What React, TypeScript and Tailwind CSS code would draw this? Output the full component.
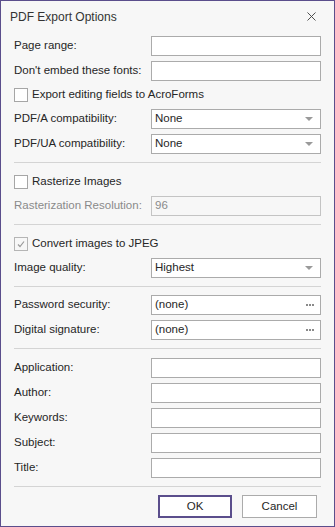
import { X } from "lucide-react";

const font = { fontFamily: '"Liberation Sans", Arial, sans-serif' };

function Field({
  label,
  value = "",
  kind = "text",
  disabled = false,
}: {
  label: string;
  value?: string;
  kind?: "text" | "combo" | "button";
  disabled?: boolean;
}) {
  return (
    <div className="flex items-center h-5">
      <div
        className={`w-[137px] text-[11.5px] ${disabled ? "text-[#8a8a8a]" : "text-[#262626]"}`}
      >
        {label}
      </div>
      <div
        className={`flex-1 h-5 border flex items-center pl-[3px] pr-[6px] text-[11.5px] ${
          disabled ? "bg-[#f7f7f7] text-[#8a8a8a] border-[#c4c4c4]" : "bg-white text-[#262626] border-[#ababab]"
        }`}
      >
        <span className="flex-1">{value}</span>
        {kind === "combo" && (
          <span className="w-0 h-0 border-l-[4px] border-r-[4px] border-t-[4px] border-l-transparent border-r-transparent border-t-[#9a9a9a] mr-[1px]" />
        )}
        {kind === "button" && (
          <span className="flex gap-[1px]">
            <span className="w-[2px] h-[2px] bg-[#8a8a8a]" />
            <span className="w-[2px] h-[2px] bg-[#8a8a8a]" />
            <span className="w-[2px] h-[2px] bg-[#8a8a8a]" />
          </span>
        )}
      </div>
    </div>
  );
}

function Check({ label, checked = false }: { label: string; checked?: boolean }) {
  return (
    <div className="flex items-center h-[18px] gap-[4px] text-[11.5px] text-[#262626]">
      <span
        className={`w-[14px] h-[14px] border flex items-center justify-center ${
          checked ? "border-[#b5b5b5] bg-[#f7f7f7]" : "border-[#a6a6a6] bg-white"
        }`}
      >
        {checked && (
          <svg width="10" height="10" viewBox="0 0 10 10">
            <path d="M2 5.5 L4 7.5 L8 2.5" fill="none" stroke="#9a9a9a" strokeWidth="1.2" />
          </svg>
        )}
      </span>
      <span>{label}</span>
    </div>
  );
}

function Sep() {
  return <div className="h-px bg-[#d4d4d4] my-[8px]" />;
}

export default function App() {
  return (
    <div
      className="w-[335px] h-[527px] bg-[#f7f7f7] border border-[#5b4e8c] flex flex-col"
      style={font}
    >
      <div className="h-[31px] mb-[4px] flex items-center justify-between pl-[9px] pr-[15px]">
        <span className="text-[12px] text-[#333]">PDF Export Options</span>
        <X className="w-[15px] h-[15px] text-[#444]" strokeWidth={1.5} />
      </div>

      <div className="px-[13px] flex flex-col">
        <div className="flex flex-col gap-[5px]">
          <Field label="Page range:" />
          <Field label="Don't embed these fonts:" />
          <Check label="Export editing fields to AcroForms" />
          <Field label="PDF/A compatibility:" value="None" kind="combo" />
          <Field label="PDF/UA compatibility:" value="None" kind="combo" />
        </div>
        <Sep />
        <div className="flex flex-col gap-[5px] pt-[2px]">
          <Check label="Rasterize Images" />
          <Field label="Rasterization Resolution:" value="96" disabled />
        </div>
        <Sep />
        <div className="flex flex-col gap-[5px] pt-[2px]">
          <Check label="Convert images to JPEG" checked />
          <Field label="Image quality:" value="Highest" kind="combo" />
        </div>
        <Sep />
        <div className="flex flex-col gap-[5px]">
          <Field label="Password security:" value="(none)" kind="button" />
          <Field label="Digital signature:" value="(none)" kind="button" />
        </div>
        <Sep />
        <div className="flex flex-col gap-[5px] pt-[1px]">
          <Field label="Application:" />
          <Field label="Author:" />
          <Field label="Keywords:" />
          <Field label="Subject:" />
          <Field label="Title:" />
        </div>
        <Sep />
        <div className="flex justify-end gap-[10px] pr-[4px]">
          <button className="w-[74px] h-[23px] border-2 border-[#5b4e8c] bg-white text-[11.5px] text-[#262626]">
            OK
          </button>
          <button className="w-[75px] h-[23px] border border-[#ababab] bg-white text-[11.5px] text-[#262626]">
            Cancel
          </button>
        </div>
      </div>
    </div>
  );
}
